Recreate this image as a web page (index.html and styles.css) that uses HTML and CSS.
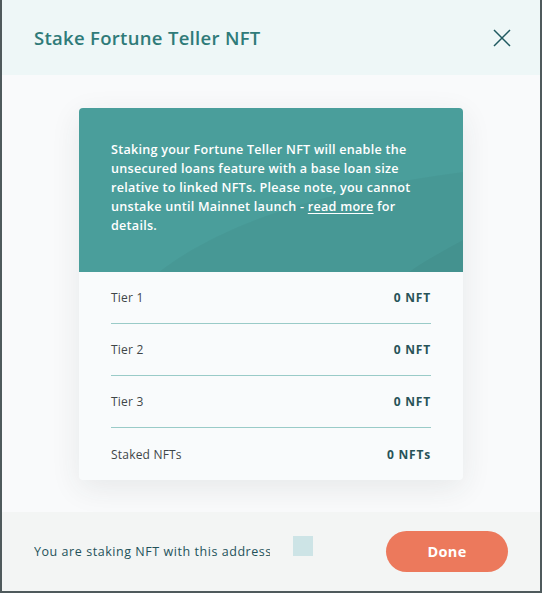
FILE: index.html
```html
<!DOCTYPE html>
<html>
<head>
<meta charset="utf-8">
<link rel="stylesheet" href="styles.css">
</head>
<body>
<div class="modal">
  <header class="modal-header">
    <h1 class="title">Stake Fortune Teller NFT</h1>
    <button class="close" aria-label="Close">
      <svg width="18" height="18" viewBox="0 0 18 18"><path d="M1 1L17 17M17 1L1 17" stroke="#1f5a60" stroke-width="1.5" fill="none"/></svg>
    </button>
  </header>
  <main class="modal-body">
    <section class="card">
      <div class="card-top">
        <svg class="wave" viewBox="0 0 384 164" preserveAspectRatio="none"><path d="M80 164 C 150 110, 260 80, 384 64 L384 164 Z" fill="#000" fill-opacity="0.035"/><path d="M330 164 C 350 150, 370 140, 384 132 L384 164 Z" fill="#000" fill-opacity="0.04"/></svg>
        <p class="intro">Staking your Fortune Teller NFT will enable the unsecured loans feature with a base loan size relative to linked NFTs. Please note, you cannot unstake until Mainnet launch - <a href="#" class="link">read more</a> for details.</p>
      </div>
      <ul class="rows">
        <li class="row"><span class="label">Tier 1</span><span class="value">0 NFT</span></li>
        <li class="row"><span class="label">Tier 2</span><span class="value">0 NFT</span></li>
        <li class="row"><span class="label">Tier 3</span><span class="value">0 NFT</span></li>
        <li class="row"><span class="label">Staked NFTs</span><span class="value">0 NFTs</span></li>
      </ul>
    </section>
  </main>
  <footer class="modal-footer">
    <span class="addr-text">You are staking NFT with this address</span>
    <span class="addr-swatch"></span>
    <button class="done">Done</button>
  </footer>
</div>
</body>
</html>
```
FILE: styles.css
```css
* { box-sizing: border-box; }
html, body { margin: 0; padding: 0; }
body {
  background: #4f5a5c;
  font-family: "Open Sans", "Noto Sans", sans-serif;
  width: 542px;
  height: 593px;
  overflow: hidden;
}
.modal {
  margin: 0 2px;
  width: 538px;
  height: 591px;
  display: flex;
  flex-direction: column;
  background: #f9fafb;
}
.modal-header {
  height: 75px;
  flex: none;
  background: #eef7f7;
  display: flex;
  align-items: center;
  justify-content: space-between;
  padding: 0 29px 0 32px;
}
.title {
  margin: 0;
  font-size: 18.5px;
  font-weight: 600;
  color: #2f7b79;
  letter-spacing: 0.3px;
}
.close {
  border: 0;
  background: none;
  padding: 0;
  width: 18px;
  height: 18px;
  display: flex;
}
.modal-body {
  flex: 1;
  padding: 33px 0 32px;
  display: flex;
  justify-content: center;
}
.card {
  width: 384px;
  border-radius: 4px;
  background: #f9fbfc;
  box-shadow: 0 8px 30px rgba(40, 50, 60, 0.09);
  overflow: hidden;
}
.card-top {
  position: relative;
  height: 164px;
  background: #4a9e9b;
  padding: 32px 32px 0;
}
.wave {
  position: absolute;
  left: 0;
  top: 0;
  width: 100%;
  height: 100%;
}
.intro {
  position: relative;
  margin: 0;
  color: #ffffff;
  font-size: 12.6px;
  font-weight: 600;
  line-height: 19px;
  letter-spacing: 0.25px;
}
.link {
  color: #ffffff;
  text-decoration: underline;
  text-underline-offset: 2px;
}
.rows {
  list-style: none;
  margin: 0;
  padding: 0 32px;
}
.row {
  height: 52px;
  display: flex;
  align-items: center;
  justify-content: space-between;
  border-bottom: 1px solid #9acbc8;
  font-size: 12px;
}
.row:last-child { border-bottom: 0; }
.label { color: #3f4648; letter-spacing: 0.2px; }
.value { color: #285358; font-weight: 700; letter-spacing: 0.8px; }
.modal-footer {
  height: 79px;
  flex: none;
  background: #f3f5f4;
  display: flex;
  align-items: center;
  padding: 0 32px;
}
.addr-text {
  width: 236px;
  overflow: hidden;
  white-space: nowrap;
  font-size: 12.5px;
  font-weight: 500;
  color: #23525a;
  letter-spacing: 0.55px;
}
.addr-swatch {
  width: 20px;
  height: 20px;
  background: #cde4e6;
  margin-left: 23px;
  margin-top: -12px;
}
.done {
  margin-left: auto;
  width: 122px;
  height: 41px;
  border: 0;
  border-radius: 21px;
  background: #ec795c;
  color: #fff;
  font-family: inherit;
  font-size: 14.5px;
  font-weight: 700;
  letter-spacing: 0.3px;
}
```
